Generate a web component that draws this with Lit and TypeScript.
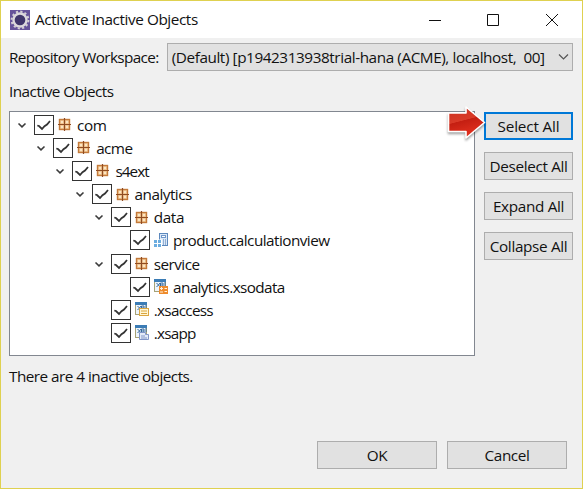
import { LitElement, html, svg, css } from "lit";
import { customElement, property } from "lit/decorators.js";

type Kind = "package" | "calc" | "odata" | "access" | "app";
interface Row { label: string; depth: number; kind: Kind; open?: boolean; spacing: number; }

const rows: Row[] = [
  { label: "com", depth: 0, kind: "package", open: true, spacing: -0.4 },
  { label: "acme", depth: 1, kind: "package", open: true, spacing: -0.6 },
  { label: "s4ext", depth: 2, kind: "package", open: true, spacing: -0.95 },
  { label: "analytics", depth: 3, kind: "package", open: true, spacing: -0.52 },
  { label: "data", depth: 4, kind: "package", open: true, spacing: -0.4 },
  { label: "product.calculationview", depth: 5, kind: "calc", spacing: -0.54 },
  { label: "service", depth: 4, kind: "package", open: true, spacing: -0.55 },
  { label: "analytics.xsodata", depth: 5, kind: "odata", spacing: -0.62 },
  { label: ".xsaccess", depth: 4, kind: "access", spacing: -0.73 },
  { label: ".xsapp", depth: 4, kind: "app", spacing: -0.8 },
];

const sheet = svg`
  <rect x="0.5" y="0.5" width="11" height="12" fill="#eef5fb" stroke="#a7a276"/>
  <rect x="0" y="0" width="12" height="3" fill="#3b7cb5"/>
  <path d="M2.5 4l2 2-2 2M6 4l-1.500 2 1.500 2M6.500 4h2.500v4H6.500zM6.500 6h2.500M11 3v4" fill="none" stroke="#35699c"/>`;

const icons: Record<Kind, unknown> = {
  package: svg`
    <rect x="1.500" y="2.500" width="10" height="10" fill="#f3c894" stroke="#c47a3a" stroke-width="1.400"/>
    <path d="M3 4h2v2H3zM8 4h2v2H8zM3 9h2v2H3zM8 9h2v2H8z" fill="#fbe6c4"/>
    <path d="M6.500 1v13M0 7.500h13" stroke="#8f4c22" stroke-width="1.200"/>`,
  calc: svg`
    <rect x="5.500" y="0.500" width="8" height="12" fill="#dce9f8" stroke="#5c88bd"/>
    <rect x="7.500" y="2.500" width="4" height="2" fill="#fff" stroke="#6f97ca"/>
    <path d="M9 7h1M11 7h1M9 9h1M11 9h1M9 11h1M11 11h1" stroke="#4674ad"/>
    <path d="M0 6.500h8V15H0z" fill="#fff"/>
    <path d="M0 7h3v3H0zM0 11h3v3H0zM4 11h3v3H4zM4 7h3v3H4z" fill="#6cade0"/>`,
  odata: svg`${sheet}<rect x="5" y="7" width="9" height="8" fill="#ee8b2c"/>
    <path d="M6 9.500h3M7.500 8v3M6 13h3M10.500 9.500h2.500M10.500 12.500h2.500" stroke="#fff2dc"/>`,
  access: svg`${sheet}<rect x="4.500" y="6.500" width="9" height="7" fill="#fff7d7" stroke="#dba641"/>
    <path d="M6 9h6M6 11.500h6" stroke="#dba641"/>`,
  app: svg`${sheet}<path d="M4.500 7.500h6v2h3v5h-9z" fill="#e4ebf8" stroke="#8296c8"/>
    <path d="M6 11h4M6 13h6" stroke="#8296c8"/>`,
};

@customElement("tree-row")
class TreeRow extends LitElement {
  @property({ attribute: false }) row!: Row;
  static styles = css`
    :host { display: flex; align-items: center; height: 23.16px; }
    .twist { width: 13px; height: 20px; flex: none; margin-right: 6px; }
    .check { width: 20px; height: 20px; flex: none; margin-right: 4px; }
    .icon { width: 15px; height: 15px; flex: none; margin-right: 4px; }
    .label { white-space: pre; }
  `;
  render() {
    const r = this.row;
    return html`
      <svg class="twist" viewBox="0 0 13 20">${r.open ? svg`<path d="M3.500 8.500l3.500 3.300 3.500-3.300" fill="none" stroke="#3c3c3c" stroke-width="1.600"/>` : ""}</svg>
      <svg class="check" viewBox="0 0 20 20"><rect x="0.500" y="0.500" width="19" height="19" fill="#fff" stroke="#333"/><path d="M3.300 10.500l1.700 .5 3 3 2.500-2.800 2.500-1.700 3-3.500" fill="none" stroke="#333" stroke-width="1.800"/></svg>
      <svg class="icon" viewBox="0 0 15 15">${icons[r.kind]}</svg>
      <span class="label" style="letter-spacing:${r.spacing}px">${r.label}</span>`;
  }
}

@customElement("app-root")
class AppRoot extends LitElement {
  static styles = css`
    :host { display: block; font: 15.300px/20px "Open Sans", "Noto Sans", sans-serif; color: #111; letter-spacing: -0.400px; }
    * { box-sizing: border-box; }
    .window { width: 583px; height: 489px; border: 1px solid #dfd150; background: #f0f0f0; overflow: hidden; }
    .title { height: 37px; background: #fff; display: flex; align-items: center; padding: 0 23px 0 9px; }
    .logo { width: 20px; height: 20px; margin-right: 5px; }
    .caption { flex: 1; padding-bottom: 2px; letter-spacing: -0.420px; }
    .controls { width: 130px; height: 14px; }
    .content { padding: 5px 9px 0 8px; }
    .workspace { display: flex; height: 28px; align-items: center; }
    .workspace label { width: 158px; white-space: nowrap; letter-spacing: -0.640px; }
    .select { width: 407px; height: 28px; display: flex; align-items: center; justify-content: space-between; padding: 0 3px 0 4px; background: #e1e1e1; border: 1px solid #adadad; white-space: pre; letter-spacing: -0.420px; }
    .chevron { width: 11px; height: 8px; }
    .heading { margin-top: 10px; height: 30px; letter-spacing: -0.520px; }
    .main { display: flex; gap: 9px; }
    .tree { width: 466px; height: 245px; background: #fff; border: 1px solid #828790; padding: 1px 0 0 5px; }
    .item { display: block; }
    .side { display: flex; flex-direction: column; gap: 12px; width: 89px; padding-top: 1px; }
    .button { height: 28px; display: flex; justify-content: center; align-items: center; background: #e1e1e1; border: 1px solid #adadad; white-space: nowrap; }
    .side .button { letter-spacing: -0.340px; }
    .side .focus { border: 2px solid #0078d7; letter-spacing: -0.150px; }
    .side-anchor { position: relative; }
    .pointer { position: absolute; left: -38px; top: -9px; width: 44px; height: 44px; filter: drop-shadow(0 2px 1px rgba(0, 0, 0, 0.35)); }
    .status { margin-top: 10px; letter-spacing: -0.520px; }
    .actions { display: flex; gap: 10px; margin: 55px 0 0 308px; }
    .actions .button { width: 120px; }
  `;
  render() {
    return html`<div class="window">
      <div class="title">
        <svg class="logo" viewBox="0 0 20 20"><rect width="20" height="20" fill="#66539a"/><circle cx="10" cy="10" r="6.500" fill="#40366b" stroke="#dcd8dc" stroke-width="2.400"/><circle cx="10" cy="10" r="8.400" fill="none" stroke="#d4d0d5" stroke-width="2" stroke-dasharray="2.200 2.198"/></svg>
        <span class="caption">Activate Inactive Objects</span>
        <svg class="controls" viewBox="0 0 130 14"><path d="M0 7.500h12M58.500 1.500h11v11h-11zM117 1l12 12M129 1l-12 12" fill="none" stroke="#111"/></svg>
      </div>
      <div class="content">
        <div class="workspace"><label>Repository Workspace:</label><div class="select"><span>(Default) [p1942313938trial-hana (ACME), localhost,  00]</span><svg class="chevron" viewBox="0 0 11 8"><path d="M1 1.500l4.500 4.500L10 1.500" fill="none" stroke="#555" stroke-width="1.200"/></svg></div></div>
        <div class="heading">Inactive Objects</div>
        <div class="main">
          <div class="tree">${rows.map((row) => html`<div class="item" style="padding-left:${row.depth * 19.2}px"><tree-row .row=${row}></tree-row></div>`)}</div>
          <div class="side">
            <div class="side-anchor"><div class="button focus">Select All</div>
              <svg class="pointer" viewBox="0 0 44 44">
                <defs><linearGradient id="red" x1="0" y1="0" x2="0.300" y2="1"><stop offset="0" stop-color="#c9301f"/><stop offset="0.500" stop-color="#d93a28"/><stop offset="0.520" stop-color="#c41f12"/><stop offset="1" stop-color="#e3311f"/></linearGradient></defs>
                <path d="M2.500 10h17.500V4l18.500 15.500L20 35v-6.500H2.500z" fill="url(#red)" stroke="#fff" stroke-width="1.600" stroke-linejoin="round"/>
              </svg></div>
            <div class="button">Deselect All</div><div class="button">Expand All</div><div class="button">Collapse All</div>
          </div>
        </div>
        <div class="status">There are 4 inactive objects.</div>
        <div class="actions"><div class="button">OK</div><div class="button">Cancel</div></div>
      </div>
    </div>`;
  }
}
